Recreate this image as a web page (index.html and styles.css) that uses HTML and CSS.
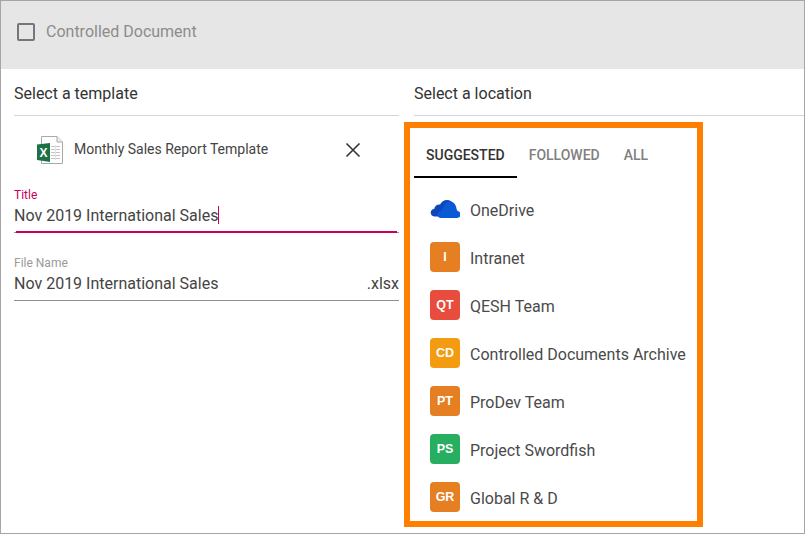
FILE: index.html
```html
<!DOCTYPE html>
<html lang="en">
<head>
<meta charset="utf-8">
<title>Controlled Document</title>
<link rel="stylesheet" href="styles.css">
</head>
<body>
<div class="frame">
  <header class="topbar">
    <span class="checkbox"></span>
    <span class="topbar-label">Controlled Document</span>
  </header>
  <main class="columns">
    <section class="col-left">
      <h2 class="heading">Select a template</h2>
      <div class="template">
        <svg class="xl-icon" width="26" height="28" viewBox="0 0 26 28">
          <path d="M4.500.5H20l5.500 5.500v21.500H4.500z" fill="#fff" stroke="#a9a9a9"/>
          <path d="M20 .5V6h5.500" fill="#eee" stroke="#a9a9a9"/>
          <g stroke="#c4c4c4">
            <path d="M14 10.500h9M14 13.500h9M14 16.500h9M14 19.500h9M14 22.500h9"/>
            <path d="M18.500 9v15" stroke="#e4e4e4"/>
          </g>
          <path d="M0 8.500 13 7v19L0 24z" fill="#1e7145"/>
          <text class="xl-letter" x="6.500" y="21">X</text>
        </svg>
        <span class="template-name">Monthly Sales Report Template</span>
        <svg class="close" width="16" height="16" viewBox="0 0 16 16">
          <path d="M1.500 1.500l13 13M14.500 1.500l-13 13" stroke="#333" stroke-width="1.600" fill="none"/>
        </svg>
      </div>
      <div class="field field-active">
        <label class="field-label label-active">Title</label>
        <div class="field-value">Nov 2019 International Sales<span class="caret"></span></div>
      </div>
      <div class="field field-file">
        <label class="field-label">File Name</label>
        <div class="field-value field-row"><span>Nov 2019 International Sales</span><span>.xlsx</span></div>
      </div>
    </section>
    <section class="col-right">
      <h2 class="heading heading-right">Select a location</h2>
      <div class="panel">
        <nav class="tabs">
          <span class="tab tab-active">SUGGESTED</span>
          <span class="tab">FOLLOWED</span>
          <span class="tab">ALL</span>
        </nav>
        <ul class="sites">
          <li class="site">
            <svg class="onedrive" width="30" height="30" viewBox="0 0 30 30">
              <path d="M5 21.500C2.500 21.500.7 19.800.7 17.700.7 15.600 2.300 14 4.300 13.800 4.800 11 7 9.200 10 9.600 11.500 6.800 14 5 17 5c3 0 5.500 1.800 6.500 4.500L14 21.500z" fill="#0f47b8"/>
              <path d="M11 23C8.800 23 7.500 21.300 7.500 19.700 7.500 17.800 9 16.300 11 16.300 11.300 14.800 12 13.800 13.300 13.200 14 9 17 6.500 20 6.500 23.300 6.500 25.500 9 26.200 12.300 26.400 13.500 26.800 15 27.500 16 29.500 16.300 30.700 17.800 30.700 19.500 30.700 21.500 29 23 27 23z" fill="#0a5ad6"/>
            </svg>
            <span>OneDrive</span>
          </li>
          <li class="site"><span class="tile tile-orange">I</span><span>Intranet</span></li>
          <li class="site"><span class="tile tile-red">QT</span><span>QESH Team</span></li>
          <li class="site"><span class="tile tile-amber">CD</span><span>Controlled Documents Archive</span></li>
          <li class="site"><span class="tile tile-orange">PT</span><span>ProDev Team</span></li>
          <li class="site"><span class="tile tile-green">PS</span><span>Project Swordfish</span></li>
          <li class="site"><span class="tile tile-orange">GR</span><span>Global R &amp; D</span></li>
        </ul>
      </div>
    </section>
  </main>
</div>
</body>
</html>
```
FILE: styles.css
```css
* { box-sizing: border-box; }
html, body { margin: 0; padding: 0; }
body {
  width: 805px;
  height: 534px;
  overflow: hidden;
  background: #fff;
  font-family: Roboto, "Liberation Sans", sans-serif;
  color: #444;
}
.frame {
  width: 805px;
  height: 534px;
  border: 1px solid #a6a6a6;
  display: flex;
  flex-direction: column;
}
.topbar {
  height: 68px;
  flex: none;
  background: #e6e6e6;
  display: flex;
  align-items: center;
  padding: 0 0 7px 16px;
}
.checkbox {
  width: 18px;
  height: 18px;
  border: 2px solid #767676;
  border-radius: 2px;
  margin-top: 1px;
}
.topbar-label {
  margin-left: 11px;
  font-size: 16px;
  color: #8c8c8c;
}
.columns {
  flex: 1;
  display: flex;
}
.col-left {
  width: 403px;
  padding: 0 5px 0 13px;
}
.col-right {
  flex: 1;
  min-width: 0;
}
.heading {
  margin: 0;
  height: 47px;
  border-bottom: 1px solid #d5d5d5;
  font-size: 16px;
  font-weight: 400;
  line-height: 50px;
  color: #333;
}
.heading-right { margin-left: 10px; }
.template {
  height: 68px;
  display: flex;
  align-items: center;
  padding-left: 23px;
}
.xl-icon { flex: none; }
.xl-letter {
  font-family: "Liberation Sans", sans-serif;
  font-size: 12px;
  font-weight: 700;
  fill: #fff;
  text-anchor: middle;
}
.template-name {
  margin: 0 0 2px 11px;
  font-size: 14px;
  color: #444;
}
.close { margin-left: 77px; flex: none; }
.field { display: block; }
.field-label {
  display: block;
  font-size: 12px;
  line-height: 14px;
  color: #9a9a9a;
}
.label-active { color: #c8005a; }
.field-value {
  font-size: 16px;
  line-height: 20px;
  margin-top: 4px;
  color: #444;
}
.field-active {
  height: 49px;
  padding-top: 4px;
  border-bottom: 1px solid #8f8f8f;
  position: relative;
}
.field-active::after {
  content: "";
  position: absolute;
  left: 2px;
  right: 2px;
  bottom: -1px;
  height: 2px;
  background: #c8005a;
}
.field-file {
  height: 45px;
  margin-top: 23px;
  border-bottom: 1px solid #8f8f8f;
}
.field-row {
  display: flex;
  justify-content: space-between;
}
.caret {
  display: inline-block;
  width: 1px;
  height: 18px;
  margin-bottom: -3px;
  background: #c8005a;
}
.panel {
  width: 299px;
  height: 405px;
  margin-top: 6px;
  border: 6px solid #ff8000;
}
.tabs {
  height: 50px;
  display: flex;
  margin-left: 4px;
}
.tab {
  padding: 0 12px;
  font-size: 14px;
  font-weight: 500;
  line-height: 54px;
  color: #808080;
}
.tab-active {
  color: #333;
  border-bottom: 2px solid #000;
}
.sites {
  list-style: none;
  margin: 0;
  padding: 8px 0 0 20px;
}
.site {
  height: 48px;
  display: flex;
  align-items: center;
  gap: 10px;
  font-size: 16px;
  color: #4a4a4a;
  white-space: nowrap;
}
.onedrive { flex: none; }
.tile {
  width: 30px;
  height: 30px;
  flex: none;
  margin-top: -2px;
  display: flex;
  align-items: center;
  justify-content: center;
  border-radius: 4px;
  font-family: "Liberation Sans", sans-serif;
  font-size: 12.5px;
  font-weight: 700;
  color: #fff;
}
.tile-orange { background: #e67e22; }
.tile-red { background: #e74c3c; }
.tile-amber { background: #f39c12; }
.tile-green { background: #27ae60; }
```
